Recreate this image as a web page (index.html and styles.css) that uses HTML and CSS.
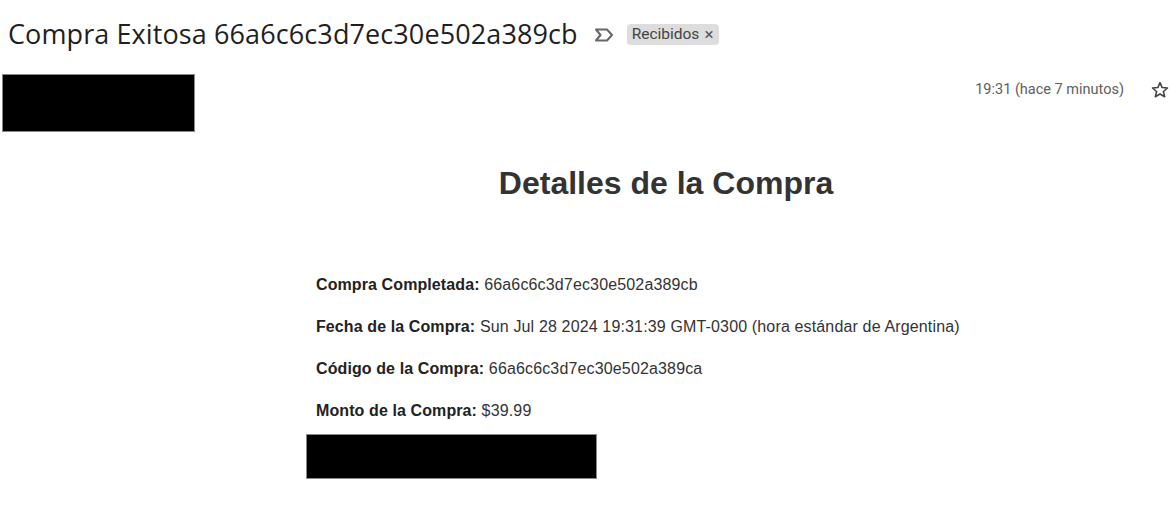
FILE: index.html
```html
<!DOCTYPE html>
<html lang="es">
<head>
<meta charset="utf-8">
<title>Compra Exitosa</title>
<link rel="stylesheet" href="styles.css">
</head>
<body>
<div class="subject-row">
  <h2 class="subject">Compra Exitosa 66a6c6c3d7ec30e502a389cb</h2>
  <svg class="label-icon" width="20" height="14" viewBox="0 0 20 14" aria-hidden="true">
    <path d="M2 1.5 H13 L18 7 L13 12.5 H2 L6.5 7 Z" fill="none" stroke="#666" stroke-width="2" stroke-linejoin="round"/>
  </svg>
  <span class="chip">Recibidos <span class="chip-x">×</span></span>
</div>

<div class="sender-row">
  <div class="redacted sender-box"></div>
  <div class="meta">
    <span class="time">19:31 (hace 7 minutos)</span>
    <svg class="star" width="20" height="20" viewBox="0 0 24 24" aria-hidden="true">
      <path d="M12 3.2 L14.6 9.1 L21 9.6 L16.1 13.8 L17.6 20.1 L12 16.8 L6.4 20.1 L7.9 13.8 L3 9.6 L9.4 9.1 Z" fill="none" stroke="#444" stroke-width="1.9" stroke-linejoin="round"/>
    </svg>
  </div>
</div>

<div class="mail-wrap">
  <div class="mail">
    <h1 class="mail-title">Detalles de la Compra</h1>
    <div class="details">
      <p class="row"><strong>Compra Completada:</strong> 66a6c6c3d7ec30e502a389cb</p>
      <p class="row"><strong>Fecha de la Compra:</strong> Sun Jul 28 2024 19:31:39 GMT-0300 (hora estándar de Argentina)</p>
      <p class="row"><strong>Código de la Compra:</strong> 66a6c6c3d7ec30e502a389ca</p>
      <p class="row"><strong>Monto de la Compra:</strong> $39.99</p>
    </div>
    <div class="redacted footer-box"></div>
  </div>
</div>
</body>
</html>
```

FILE: styles.css
```css
html, body {
  margin: 0;
  padding: 0;
  background: #fff;
}

body {
  width: 1176px;
  height: 528px;
  overflow: hidden;
  font-family: Roboto, "Liberation Sans", Arial, sans-serif;
}

.subject-row {
  display: flex;
  align-items: center;
  height: 40px;
  padding: 14px 0 0 8px;
}

.subject {
  margin: 0;
  font-family: "Open Sans", Roboto, sans-serif;
  font-weight: 400;
  font-size: 27px;
  line-height: 36px;
  letter-spacing: 0.1px;
  color: #1f1f1f;
  white-space: nowrap;
}

.label-icon {
  margin-left: 16px;
  margin-top: 1px;
}

.chip {
  display: inline-flex;
  align-items: center;
  margin-left: 13px;
  height: 21px;
  padding: 0 6px 0 5px;
  border-radius: 4px;
  background: #dddddd;
  color: #444;
  font-family: Roboto, sans-serif;
  font-size: 15.5px;
}

.chip-x {
  margin-left: 5px;
  font-size: 17px;
  line-height: 1;
  color: #555;
}

.sender-row {
  display: flex;
  justify-content: space-between;
  align-items: flex-start;
  margin-top: 20px;
  padding-left: 2px;
}

.redacted {
  background: #000;
  border: 1px solid #8a8a8a;
  box-sizing: border-box;
}

.sender-box {
  width: 193px;
  height: 58px;
}

.meta {
  display: flex;
  align-items: center;
  padding-top: 5px;
  padding-right: 6px;
}

.time {
  font-family: Roboto, sans-serif;
  font-size: 14.5px;
  color: #5e5e5e;
}

.star {
  margin-left: 26px;
  margin-top: 1px;
}

.mail-wrap {
  padding-left: 156px;
}

.mail {
  width: 700px;
  margin: 0 auto;
  font-family: "Liberation Sans", Arial, sans-serif;
  color: #333;
}

.mail-title {
  margin: 33px 0 0 0;
  text-align: center;
  font-size: 32px;
  line-height: 37px;
  font-weight: 700;
  color: #333;
}

.details {
  margin-top: 74px;
  display: flex;
  flex-direction: column;
  gap: 24px;
}

.row {
  margin: 0;
  font-size: 16px;
  line-height: 18px;
  letter-spacing: 0.15px;
  color: #333;
}

.row strong {
  color: #222;
  letter-spacing: 0.1px;
}

.footer-box {
  width: 291px;
  height: 45px;
  margin: 14px 0 0 -10px;
}
```
